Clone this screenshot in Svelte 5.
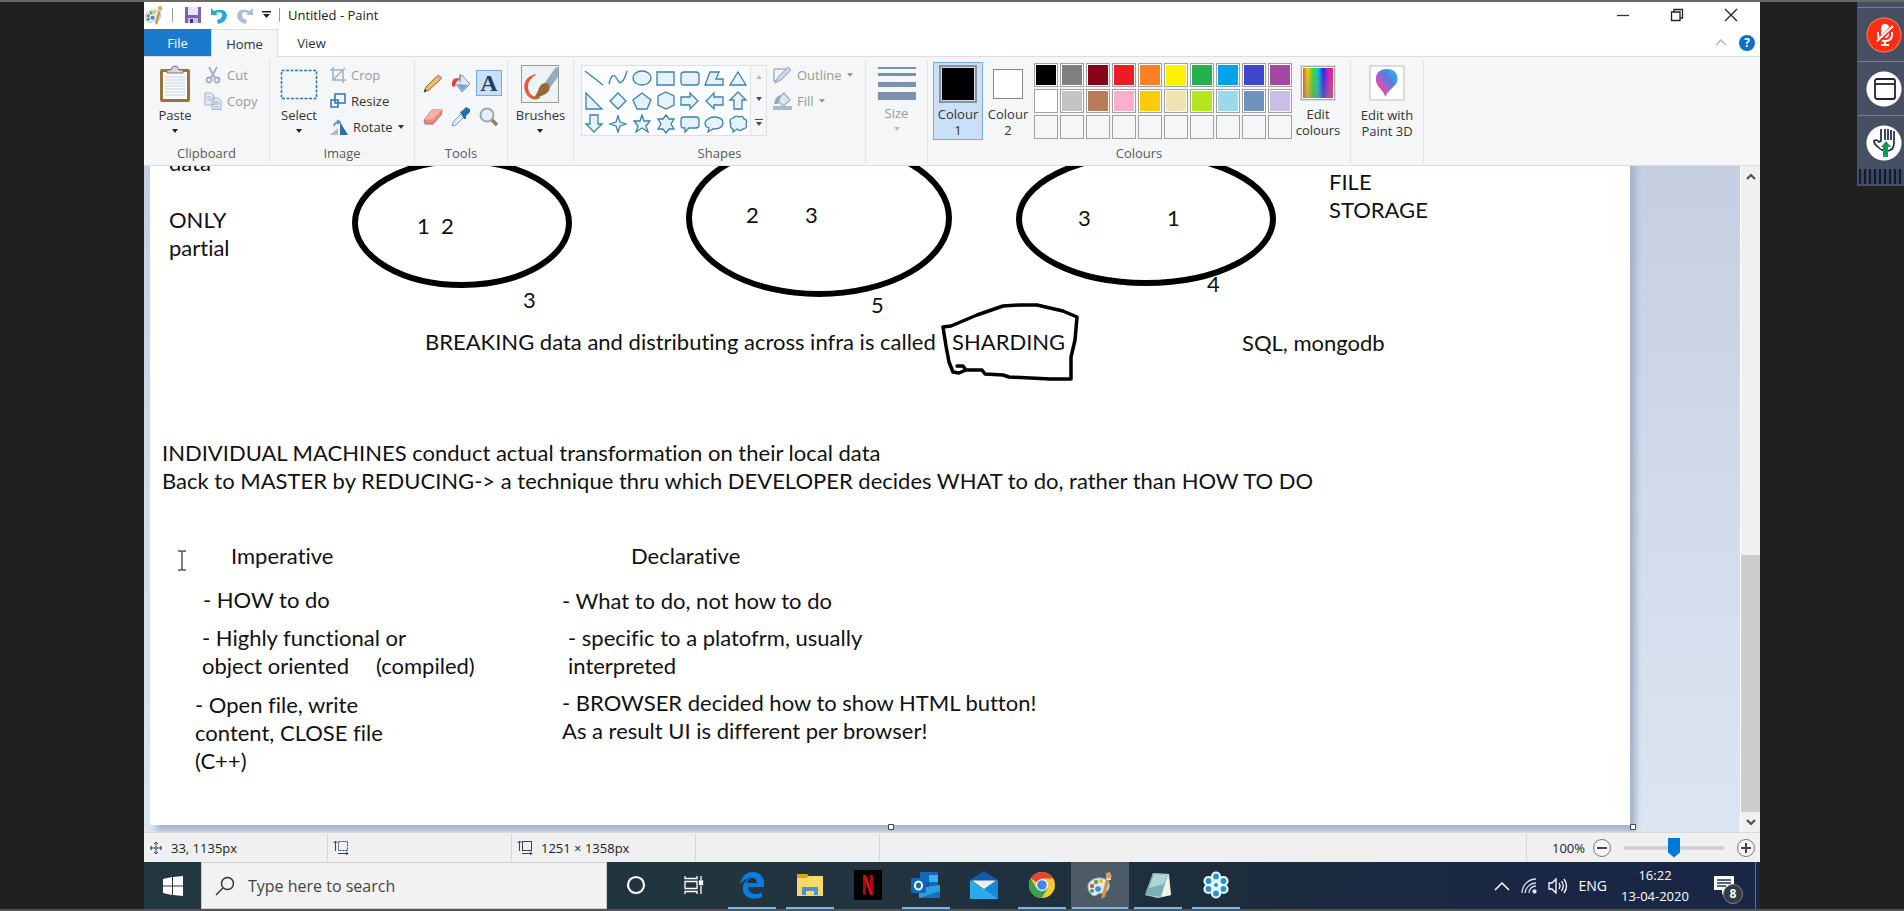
<script>
  const notes = [
    { x: 25, y: -17, t: 'data' },
    { x: 25, y: 40, t: 'ONLY\npartial' },
    { x: 273, y: 46, t: '1  2' },
    { x: 602, y: 35, t: '2' },
    { x: 661, y: 35, t: '3' },
    { x: 934, y: 38, t: '3' },
    { x: 1023, y: 38, t: '1' },
    { x: 379, y: 120, t: '3' },
    { x: 727, y: 125, t: '5' },
    { x: 1063, y: 104, t: '4' },
    { x: 1185, y: 2, t: 'FILE\nSTORAGE' },
    { x: 1098, y: 163, t: 'SQL, mongodb' },
    { x: 281, y: 162, t: 'BREAKING data and distributing across infra is called' },
    { x: 808, y: 162, t: 'SHARDING' },
    { x: 18, y: 273, t: 'INDIVIDUAL MACHINES conduct actual transformation on their local data\nBack to MASTER by REDUCING-> a technique thru which DEVELOPER decides WHAT to do, rather than HOW TO DO' },
    { x: 87, y: 376, t: 'Imperative' },
    { x: 487, y: 376, t: 'Declarative' },
    { x: 59, y: 420, t: '- HOW to do' },
    { x: 418, y: 421, t: '- What to do, not how to do' },
    { x: 58, y: 458, t: '- Highly functional or' },
    { x: 58, y: 486, t: 'object oriented' },
    { x: 232, y: 486, t: '(compiled)' },
    { x: 424, y: 458, t: '- specific to a platofrm, usually\ninterpreted' },
    { x: 51, y: 525, t: '- Open file, write\ncontent, CLOSE file\n(C++)' },
    { x: 418, y: 523, t: '- BROWSER decided how to show HTML button!\nAs a result UI is different per browser!' }
  ];
  const palette = [
    '#000000', '#7f7f7f', '#880015', '#ed1c24', '#ff7f27', '#fff200', '#22b14c', '#00a2e8', '#3f48cc', '#a349a4',
    '#ffffff', '#c3c3c3', '#b97a57', '#ffaec9', '#ffc90e', '#efe4b0', '#b5e61d', '#99d9ea', '#7092be', '#c8bfe7',
    '', '', '', '', '', '', '', '', '', ''
  ];
  const shapes = [
    ['Line', 'M1 3L19 17'],
    ['Curve', 'M1 16C3 7 6 5 9 11S15 16 19 3'],
    ['Oval', 'M10 3C15 3 19 6 19 10S15 17 10 17S1 14 1 10S5 3 10 3Z'],
    ['Rectangle', 'M1 4H18V17H1Z'],
    ['Rounded rectangle', 'M4 4H16Q19 4 19 7V14Q19 17 16 17H4Q1 17 1 14V7Q1 4 4 4Z'],
    ['Polygon', 'M6 4H15L12 11H19V17H1Z'],
    ['Triangle', 'M10 4L18 17H2Z'],
    ['Right triangle', 'M2 2L18 18H2Z'],
    ['Diamond', 'M10 2L18 10L10 18L2 10Z'],
    ['Pentagon', 'M10 2L19 9L15 18H5L1 9Z'],
    ['Hexagon', 'M10 1L18 5V14L10 18L2 14V5Z'],
    ['Right arrow', 'M1 6H10V2L18 10L10 18V14H1Z'],
    ['Left arrow', 'M19 6H10V2L2 10L10 18V14H19Z'],
    ['Up arrow', 'M6 18V9H2L10 1L18 9H14V18Z'],
    ['Down arrow', 'M6 1V10H2L10 18L18 10H14V1Z'],
    ['Four-point star', 'M10 2L12 8L18 10L12 12L10 18L8 12L2 10L8 8Z'],
    ['Five-point star', 'M10 1L12 7H18L14 12L16 18L10 14L4 18L6 12L2 7H8Z'],
    ['Six-point star', 'M10 1L13 5H18L15 10L18 15H13L10 19L7 15H2L5 10L2 5H7Z'],
    ['Rounded callout', 'M4 3H16Q19 3 19 6V11Q19 14 16 14H9L5 18V14H4Q1 14 1 11V6Q1 3 4 3Z'],
    ['Oval callout', 'M10 3C15 3 19 5 19 9S15 15 9 15L4 18L5 14C2 13 1 11 1 9S5 3 10 3Z'],
    ['Cloud callout', 'M5 4Q8 1 11 3Q15 1 16 5Q20 6 18 10Q20 14 15 15Q12 18 9 15L5 18V15Q1 13 3 10Q0 6 5 4Z']
  ];
  const statusCells = ['33, 1135px', '', '1251 × 1358px'];
  let zoom = $state(50);
</script>

{#snippet caret()}<svg class="caret" width="6" height="4" viewBox="0 0 6 4"><path d="M0 0H6L3 4Z" fill="currentColor" /></svg>{/snippet}

{#snippet paintIcon(size)}
  <svg width={size} height={size} viewBox="0 0 28 28">
    <path d="M3 20C-1 12 7 6 15 7C23 8 25 14 22 19C19 24 15 21 12 23C9 26 5 25 3 20Z" fill="#dcebf2" stroke="#8fb7cb" />
    <circle cx="6" cy="15" r="2.2" fill="#e0503c" /><circle cx="10" cy="11" r="2.2" fill="#57ae44" /><circle cx="15" cy="10" r="2" fill="#e8bd33" />
    <circle cx="6" cy="20" r="2" fill="#38a45f" /><circle cx="12" cy="18" r="2.8" fill="#4b86dc" />
    <path d="M20 2L24 1L26 6L20 9Z" fill="#d3a566" /><path d="M20 8L24 6L19 26L15 28Z" fill="#d29444" /><path d="M21 7H25V9H20Z" fill="#d8dde0" />
  </svg>
{/snippet}

<div class="screen">
  <div class="desktop">
    <header class="title">
      {@render paintIcon(20)}
      <span class="bar first"></span>
      <button class="bare" aria-label="Save"><svg width="18" height="18" viewBox="0 0 18 18"><path d="M1 1H17V17H1Z" fill="#7e62ae" /><path d="M4 1H14V9H4Z" fill="#e9e6f5" /><path d="M4 12H14V17H4Z" fill="#c8bedd" /><path d="M6 13H9V17H6Z" fill="#4c377c" /></svg></button>
      <button class="bare" aria-label="Undo"><svg width="18" height="18" viewBox="0 0 18 18"><path d="M1 2V9H8L6 7Q12 5 12 9Q12 13 7 14L8 18Q17 16 17 9Q15 1 4 5Z" fill="#30a5df" /></svg></button>
      <button class="bare" aria-label="Redo"><svg width="18" height="18" viewBox="0 0 18 18"><path d="M17 2V9H10L12 7Q6 5 6 9Q6 13 11 14L10 18Q1 16 1 9Q3 1 14 5Z" fill="#aebcd2" /></svg></button>
      <button class="bare more" aria-label="Customise toolbar"><svg width="9" height="8" viewBox="0 0 9 8"><path d="M0 0H9V1.500H0ZM1 3H8L4.500 7Z" fill="#222" /></svg></button>
      <span class="bar"></span>
      <span class="name">Untitled - Paint</span>
      <div class="winbtns">
        <button class="bare" aria-label="Minimise"><svg width="14" height="14" viewBox="0 0 14 14"><path d="M1 7.500H13" stroke="#333" stroke-width="1.300" /></svg></button>
        <button class="bare" aria-label="Restore"><svg width="14" height="14" viewBox="0 0 14 14" fill="none" stroke="#222" stroke-width="1.300"><path d="M1.500 4H10V12.500H1.500ZM4 4V1.500H12.500V10H10" /></svg></button>
        <button class="bare" aria-label="Close"><svg width="14" height="14" viewBox="0 0 14 14"><path d="M1 1L13 13M13 1L1 13" stroke="#222" stroke-width="1.300" /></svg></button>
      </div>
    </header>

    <nav class="tabs">
      <button class="tab file">File</button>
      <button class="tab on">Home</button>
      <button class="tab">View</button>
      <div class="tabend">
        <svg width="12" height="7" viewBox="0 0 12 7"><path d="M1 6L6 1L11 6" fill="none" stroke="#b5b5b5" stroke-width="1.500" /></svg>
        <button class="help" aria-label="Help">?</button>
      </div>
    </nav>

    <section class="ribbon">
      <div class="group clip">
        <div class="tools">
          <button class="big"><svg width="32" height="38" viewBox="0 0 32 38"><rect x="1" y="4" width="30" height="33" rx="2" fill="#9d703c" /><path d="M4 7H28V34H4Z" fill="#f8fafc" /><path d="M6 12H26M6 15H26M6 18H26M6 21H26M6 24H26M6 27H26M6 30H26" stroke="#c5d0dc" /><path d="M8 8V5H12Q13 1 16 1T20 5H24V8Z" fill="#d6d8da" stroke="#777" /></svg><span>Paste</span>{@render caret()}</button>
          <div class="rows">
            <button class="row off"><svg width="18" height="18" viewBox="0 0 18 18" fill="none" stroke="#9fb0ca" stroke-width="1.800"><path d="M5 1L11 12M13 1L7 12" /><circle cx="5" cy="14" r="2.500" /><circle cx="13" cy="14" r="2.500" /></svg>Cut</button>
            <button class="row off"><svg width="18" height="18" viewBox="0 0 18 18" fill="#e5ebf5" stroke="#9fb0ca"><path d="M1 1H7L10 4V13H1ZM8 6H14L17 9V17.500H8Z" /><path d="M3 5H7M3 8H7M10 10H15M10 12H15M10 15H15" /></svg>Copy</button>
          </div>
        </div>
        <h2>Clipboard</h2>
      </div>
      <div class="group image">
        <div class="tools">
          <button class="big"><svg width="38" height="38" viewBox="0 0 38 38"><rect x="1.500" y="5.500" width="35" height="28" fill="none" stroke="#2a76b4" stroke-width="1.500" stroke-dasharray="3 1.500" /></svg><span>Select</span>{@render caret()}</button>
          <div class="rows">
            <button class="row off"><svg width="16" height="16" viewBox="0 0 16 16" fill="none" stroke="#9fb0ca" stroke-width="1.500"><path d="M3 0V13H16M0 3H13V16M4 12L15 1" /></svg>Crop</button>
            <button class="row"><svg width="16" height="16" viewBox="0 0 16 16" fill="#f5f9fd" stroke="#2a76b4" stroke-width="1.500"><path d="M5 1H15V10H5ZM1 7H8V14H1Z" /></svg>Resize</button>
            <button class="row"><svg width="18" height="16" viewBox="0 0 18 16"><path d="M0 16H8V9Z" fill="#a9bdd1" /><path d="M10 3V16H18Z" fill="#2472b1" /><path d="M4 7Q5 3 8 3M7 1L10 3L7 5" fill="none" stroke="#3988c6" stroke-width="1.500" /></svg>Rotate{@render caret()}</button>
          </div>
        </div>
        <h2>Image</h2>
      </div>
      <div class="group tool">
        <div class="toolgrid">
          <button aria-label="Pencil"><svg width="20" height="20" viewBox="0 0 20 20"><path d="M1 19L3 14L15 2L19 5L6 17Z" fill="#efbd62" stroke="#8c673a" /><path d="M15 2L19 5L17 7L13 4Z" fill="#d9a5a5" /><path d="M1 19L2 16L4 18Z" fill="#333" /></svg></button>
          <button aria-label="Fill with colour"><svg width="20" height="20" viewBox="0 0 20 20"><path d="M11 2L19 11L11 19L4 10Z" fill="#dfe9f1" stroke="#7f96ac" /><path d="M6 11L17 12L11 18Z" fill="#6fa7d6" /><path d="M9 1V9" stroke="#667" /><path d="M9 6Q0 3 1 13L4 14L5 9Z" fill="#cf4d35" /></svg></button>
          <button class="picked" aria-label="Text">A</button>
          <button aria-label="Eraser"><svg width="20" height="18" viewBox="0 0 20 18"><path d="M1 12L9 2L19 2L18 7L10 16L2 16Z" fill="#e8897f" stroke="#c7635d" /><path d="M1 12L10 11L19 2L9 2Z" fill="#f4b2a8" /></svg></button>
          <button aria-label="Colour picker"><svg width="20" height="20" viewBox="0 0 20 20"><path d="M10 7L2 15L1 19L5 18L13 10" fill="#dcebf4" stroke="#829bb0" /><path d="M9 5L11 4L15 0L19 2L19 5L15 9L15 12L13 12Z" fill="#2b6da9" /></svg></button>
          <button aria-label="Magnifier"><svg width="20" height="20" viewBox="0 0 20 20"><path d="M12 12L18 18" stroke="#a17a55" stroke-width="3.500" /><circle cx="8" cy="8" r="6.500" fill="#e3f0fa" stroke="#9aa6b1" stroke-width="2" /></svg></button>
        </div>
        <h2>Tools</h2>
      </div>
      <div class="group brush">
        <button class="big"><svg width="38" height="38" viewBox="0 0 38 38"><path d="M.5.5H37.500V37.500H.5Z" fill="#edf3f5" stroke="#999" /><path d="M16 9C2 11 0 24 8 32Q14 37 20 32Q8 33 7 23Q6 15 16 9Z" fill="#dd5a35" /><path d="M23 19L35 2L37 3V12L28 24Z" fill="#94acc0" /><path d="M17 26Q19 17 26 18Q31 22 27 27Q23 31 13 33Z" fill="#9a6938" /></svg><span>Brushes</span>{@render caret()}</button>
      </div>
      <div class="group shape">
        <div class="tools">
          <div class="gallery">
            <div class="shapegrid">
              {#each shapes as [label, d], i}
                <button aria-label={label}><svg width="20" height="20" viewBox="0 0 20 20"><path {d} fill={i < 2 ? 'none' : '#e4f3fb'} stroke="#3f7fae" stroke-width="1.300" /></svg></button>
              {/each}
            </div>
            <div class="gscroll">
              <button class="dim" aria-label="Previous shapes"><svg width="6" height="4" viewBox="0 0 6 4"><path d="M3 0L6 4H0Z" fill="currentColor" /></svg></button>
              <button aria-label="Next shapes">{@render caret()}</button>
              <button aria-label="All shapes"><svg width="8" height="7" viewBox="0 0 8 7"><path d="M0 0H8V1H0ZM1 3H7L4 7Z" fill="currentColor" /></svg></button>
            </div>
          </div>
          <div class="rows">
            <button class="row off"><svg width="19" height="18" viewBox="0 0 19 18"><path d="M1 3H13M1 3V15H4" fill="none" stroke="#9fb0ca" stroke-width="1.500" /><path d="M2 17L5 11L15 1L18 4L8 14Z" fill="#cbd6e6" stroke="#8fa3c1" /></svg>Outline{@render caret()}</button>
            <button class="row off"><svg width="19" height="18" viewBox="0 0 19 18"><path d="M11 1L17 8L10 14L4 8Z" fill="#dee6f1" stroke="#9fb0ca" stroke-width="1.300" /><path d="M8 3Q2 4 1 12H5L7 7Z" fill="#91a6c6" /><path d="M0 14H19V18H0Z" fill="#aab9d0" /></svg>Fill{@render caret()}</button>
          </div>
        </div>
        <h2>Shapes</h2>
      </div>
      <div class="group size">
        <button class="big off"><svg width="38" height="34" viewBox="0 0 38 34"><path d="M0 0H38V2H0ZM0 6H38V9H0ZM0 15H38V20H0ZM0 25H38V33H0Z" fill="#7d90b2" /></svg><span>Size</span>{@render caret()}</button>
      </div>
      <div class="group colour">
        <div class="tools">
          <button class="big pick on"><i class="sw black"></i><span>Colour<br />1</span></button>
          <button class="big pick"><i class="sw"></i><span>Colour<br />2</span></button>
          <div class="palette">
            {#each palette as c}
              <button class:empty={!c} style:background-color={c} aria-label={c || 'Custom colour'}></button>
            {/each}
          </div>
          <button class="big edit"><i class="spectrum"></i><span>Edit<br />colours</span></button>
        </div>
        <h2>Colours</h2>
      </div>
      <div class="group three">
        <button class="big edit">
          <svg width="36" height="36" viewBox="0 0 36 36">
            <defs><linearGradient id="drop" x1="1" y1="0" x2="0" y2="1"><stop offset="0" stop-color="#18c3e8" /><stop offset=".4" stop-color="#5a7be0" /><stop offset=".65" stop-color="#c854c0" /><stop offset="1" stop-color="#ef5a3a" /></linearGradient></defs>
            <path d="M1 1H35V35H1Z" fill="#fff" stroke="#bbb" /><path d="M18 4C26 4 30 10 28 17C26 22 20 24 16 32C16 26 8 23 7 16C6 8 11 4 18 4Z" fill="url(#drop)" />
          </svg>
          <span>Edit with<br />Paint 3D</span>
        </button>
      </div>
    </section>

    <main class="work">
      <div class="board">
        <div class="paper"></div>
        <svg class="ink" width="1596" height="666" viewBox="144 166 1596 666" fill="none" stroke="#000">
          <g stroke-width="6"><ellipse cx="462" cy="223" rx="107" ry="62" /><ellipse cx="819" cy="218" rx="130" ry="76" /><ellipse cx="1146" cy="219" rx="127" ry="64" /></g>
          <path d="M957 366L963 366L966 370L959 373L953 372L949 362L946 346L943 327L951 326L977 315L1003 306L1020 305H1037L1063 311L1077 317L1075 340L1071 357V379H1050L1009 377L1003 375L985 374L982 370H966" stroke-width="3.500" stroke-linejoin="round" stroke-linecap="round" />
          <path d="M178 551H181L182 552L183 551H186M182 552V569M178 570H181L182 569L183 570H186" stroke="#555" stroke-width="1.500" />
          <g fill="#fff" stroke="#444"><path d="M888.500 824.500H893.500V829.500H888.500ZM1630.500 824.500H1635.500V829.500H1630.500Z" /></g>
        </svg>
        {#each notes as n}
          <p class="note" style:left="{n.x}px" style:top="{n.y}px">{n.t}</p>
        {/each}
      </div>
      <div class="scroll">
        <button aria-label="Scroll up"><svg width="10" height="7" viewBox="0 0 10 7"><path d="M1 6L5 2L9 6" fill="none" stroke="#505050" stroke-width="2.200" /></svg></button>
        <div class="track"><div class="thumb"></div></div>
        <button aria-label="Scroll down"><svg width="10" height="7" viewBox="0 0 10 7"><path d="M1 1L5 5L9 1" fill="none" stroke="#505050" stroke-width="2.200" /></svg></button>
      </div>
    </main>

    <footer class="status">
      {#each statusCells as s, i}
        <div class="cell">
          {#if i === 0}
            <svg width="14" height="14" viewBox="0 0 14 14"><path d="M7 1V13M1 7H13M5 3L7 1L9 3M5 11L7 13L9 11M3 5L1 7L3 9M11 5L13 7L11 9" fill="none" stroke="#2b4668" /></svg>
          {:else}
            <svg width="16" height="15" viewBox="0 0 16 15" fill="none" stroke="#2b4668"><path d="M2.500 1V11M.5 3L2.500 1L4.500 3M5 13.500H15M13 11.500L15 13.500L13 15" /><rect x="5.500" y="1.500" width="9" height="9" stroke-dasharray={i === 1 ? '2 1' : 'none'} /></svg>
          {/if}
          {s}
        </div>
      {/each}
      <div class="cell"></div>
      <div class="zoom">
        <label for="zoom">100%</label>
        <button aria-label="Zoom out"><svg width="10" height="10" viewBox="0 0 10 10"><path d="M0 5H10" stroke="#444" stroke-width="2" /></svg></button>
        <input id="zoom" type="range" bind:value={zoom} />
        <button aria-label="Zoom in"><svg width="10" height="10" viewBox="0 0 10 10"><path d="M0 5H10M5 0V10" stroke="#444" stroke-width="2" /></svg></button>
      </div>
    </footer>

    <footer class="taskbar">
      <button class="start" aria-label="Start"><svg width="20" height="20" viewBox="0 0 20 20"><path d="M0 3L9 1V9.500H0ZM10 1L20 0V9.500H10ZM0 10.500H9V19L0 17ZM10 10.500H20V20L10 19Z" fill="#fff" /></svg></button>
      <div class="search">
        <svg width="20" height="20" viewBox="0 0 20 20"><circle cx="12.500" cy="7.500" r="6" fill="none" stroke="#333" stroke-width="1.500" /><path d="M8 12L1 19" stroke="#333" stroke-width="1.500" /></svg>
        <input type="text" placeholder="Type here to search" aria-label="Search" />
      </div>
      <button class="app" aria-label="Cortana"><svg width="20" height="20" viewBox="0 0 20 20"><circle cx="10" cy="10" r="8" fill="none" stroke="#fff" stroke-width="2.200" /></svg></button>
      <button class="app" aria-label="Task view"><svg width="20" height="20" viewBox="0 0 20 20" fill="none" stroke="#fff" stroke-width="1.300"><path d="M1 1V3.500H13V1M1 19V16.500H13V19M1 6.500H13V13.500H1ZM17 1V5M17 11V19" /><path d="M15.500 6H18.500V9.500H15.500Z" fill="#fff" /></svg></button>
      <button class="app open" aria-label="Edge"><svg width="26" height="28" viewBox="0 0 26 28"><path d="M1 13C3 4 8 1 14 1C21 1 25 6 25 12V16H9C9 23 17 25 23 21V26C13 30 3 26 4 17C4 12 7 9 11 7C9 9 8 11 8 12H18C18 5 8 5 1 13Z" fill="#0a7ce0" /></svg></button>
      <button class="app open" aria-label="File Explorer"><svg width="28" height="24" viewBox="0 0 28 24"><path d="M1 1H11L13 3H27V23H1Z" fill="#dda419" /><path d="M1 5H11L13 3H27V23H1Z" fill="#fbd969" /><path d="M6 22V14H22V22H18V18H10V22Z" fill="#4795ce" /></svg></button>
      <button class="app" aria-label="Netflix"><svg width="28" height="30" viewBox="0 0 28 30"><path d="M0 0H28V30H0Z" fill="#000" /><path d="M9 5V25L12 24.500V5ZM16 5H19V25L16 24.500Z" fill="#a90810" /><path d="M9 5H12L19 25L16 24.500Z" fill="#e50914" /></svg></button>
      <button class="app open" aria-label="Outlook"><svg width="30" height="28" viewBox="0 0 30 28"><path d="M9 1H27V18H9Z" fill="#1767b8" /><path d="M18 4H27V11H18Z" fill="#37b2ee" /><path d="M9 11H18V18H9Z" fill="#0a56a4" /><path d="M8 17L29 14V27H8Z" fill="#2aa0e2" /><path d="M8 27L29 20V27Z" fill="#1771bd" /><rect y="7" width="15" height="15" rx="1" fill="#1068b8" /><ellipse cx="7.500" cy="14.500" rx="3.500" ry="4" fill="none" stroke="#fff" stroke-width="2" /></svg></button>
      <button class="app" aria-label="Mail"><svg width="30" height="28" viewBox="0 0 30 28"><path d="M1 9L15 0L29 9V18H1Z" fill="#155ba9" /><path d="M1 9L15 18L29 9V28H1Z" fill="#2da9ec" /><path d="M15 18L29 9V28Z" fill="#1589d8" /><path d="M3 9.500H27L15 18Z" fill="#eef2f6" /></svg></button>
      <button class="app open" aria-label="Chrome"><svg width="28" height="28" viewBox="0 0 28 28"><circle cx="14" cy="14" r="13" fill="#fcc933" /><path d="M14 14L2.700 7.500A13 13 0 0 1 25.300 7.500H14Z" fill="#e54335" /><path d="M14 14L8.400 17.300L2.700 7.500A13 13 0 0 0 14 27L19.600 17.300Z" fill="#35a352" /><circle cx="14" cy="14" r="6" fill="#fff" /><circle cx="14" cy="14" r="4.800" fill="#4286f4" /></svg></button>
      <button class="app open active" aria-label="Paint">{@render paintIcon(28)}</button>
      <button class="app open" aria-label="Notepad"><svg width="28" height="28" viewBox="0 0 28 28"><path d="M1 24L9 2L25 3L27 24L14 27Z" fill="#d3dcdb" /><path d="M1 24L9 2L24 4L17 26Z" fill="#78b1b4" /><path d="M5 17L10 3L23 4L20 13Z" fill="#afd5d4" /><path d="M17 26L24 4L27 24Z" fill="#f1f2e8" /></svg></button>
      <button class="app open" aria-label="Meeting"><svg width="28" height="28" viewBox="0 0 28 28"><g fill="#2494d0" stroke="#eaf8ff" stroke-width="2.200"><circle cx="14" cy="5.500" r="4" /><circle cx="21.500" cy="10" r="4" /><circle cx="21.500" cy="18" r="4" /><circle cx="14" cy="22.500" r="4" /><circle cx="6.500" cy="18" r="4" /><circle cx="6.500" cy="10" r="4" /></g><circle cx="14" cy="14" r="4.500" fill="#eaf8ff" /><circle cx="14" cy="14" r="2" fill="#2494d0" /></svg></button>
      <div class="tray">
        <svg width="16" height="10" viewBox="0 0 16 10"><path d="M1 9L8 2L15 9" fill="none" stroke="#fff" stroke-width="1.500" /></svg>
        <svg width="16" height="16" viewBox="0 0 16 16" fill="none" stroke="#dde" stroke-width="1.300"><path d="M1 15A14 14 0 0 1 15 1M4 15A11 11 0 0 1 15 5M8 15A7 7 0 0 1 15 8" /><circle cx="13.500" cy="13.500" r="1.500" fill="#fff" /></svg>
        <svg width="20" height="16" viewBox="0 0 20 16" fill="none" stroke="#fff" stroke-width="1.300"><path d="M1 5H4L8 1V15L4 11H1ZM11 5Q13 8 11 11M13.500 3Q17 8 13.500 13M16 1Q21 8 16 15" /></svg>
        <span>ENG</span>
      </div>
      <div class="clock"><span>16:22</span><span>13-04-2020</span></div>
      <button class="notify" aria-label="Notifications"><svg width="20" height="19" viewBox="0 0 20 19"><path d="M0 0H20V14H12L8 19V14H0Z" fill="#fff" /><path d="M3 4H17M3 7H17M3 10H12" stroke="#26324c" stroke-width="1.300" /></svg><b>8</b></button>
      <span class="peek"></span>
    </footer>
  </div>

  <aside class="dock">
    <button class="red" aria-label="Unmute"><svg width="20" height="24" viewBox="0 0 20 24"><rect x="6" y="1" width="8" height="14" rx="4" fill="#fff" /><path d="M3 9V11Q3 18 10 18T17 11V9M10 18V21M6 22H14" fill="none" stroke="#fff" stroke-width="2" /><path d="M3 19L17 4" stroke="#ff2d12" stroke-width="4" /><path d="M2 18L18 3" stroke="#fff" stroke-width="2" /></svg></button>
    <button aria-label="Window"><svg width="22" height="22" viewBox="0 0 22 22" fill="none" stroke="#1f2433" stroke-width="1.800"><rect x="1" y="1" width="20" height="20" rx="2" /><path d="M1 6H21" /></svg></button>
    <button aria-label="Raise hand"><svg width="24" height="30" viewBox="0 0 24 30"><path d="M8 1V13L6 14Q4 11 1 13Q1 16 5 19Q9 23 13 23Q21 23 21 15V3M12 1V12M15 1V12M18 2V12" fill="none" stroke="#1f2947" stroke-width="1.700" /><path d="M13 13L18 19H15V29H10V19H8Z" fill="#0a9d50" /></svg></button>
    <div class="grip"></div>
  </aside>
</div>

<style>
  :global(body) { margin: 0; background: #202020; }
  button { border: 0; padding: 0; background: none; font: inherit; color: inherit; }
  svg { display: block; flex: none; }
  .screen { position: relative; box-sizing: border-box; height: 100vh; min-height: 720px; padding: 0 144px; border-top: 2px solid #696969; border-bottom: 2px solid #555; background: #202020; font: 13px/16px "Open Sans", "Noto Sans", sans-serif; color: #333; overflow: hidden; }
  .desktop { display: flex; flex-direction: column; height: 100%; background: #fff; }

  .title { box-sizing: border-box; display: flex; align-items: center; height: 27px; flex: none; gap: 8px; padding-bottom: 2px; }
  .title .bare { display: grid; place-items: center; min-width: 18px; }
  .title .more { min-width: 9px; }
  .bar { width: 1px; height: 14px; background: #999; }
  .bar.first { margin: 0 3px 0 0; }
  .name { color: #222; }
  .winbtns { display: flex; gap: 36px; margin-left: auto; padding-right: 20px; }

  .tabs { display: flex; height: 27px; flex: none; border-bottom: 1px solid #dcdddf; }
  .tab { width: 67px; height: 27px; }
  .tab.file { background: #1979ca; color: #fff; }
  .tab.on { box-sizing: border-box; height: 28px; border: 1px solid #dcdddf; border-bottom: 0; background: #f5f6f7; }
  .tabend { display: flex; align-items: center; gap: 12px; margin-left: auto; padding-right: 5px; }
  .help { width: 16px; height: 16px; border-radius: 50%; background: #0d70c5; color: #fff; font-size: 12px; font-weight: 700; line-height: 16px; }

  .ribbon { display: flex; flex: none; height: 108px; border-bottom: 1px solid #dcdddf; background: #f5f6f7; }
  .group { box-sizing: border-box; position: relative; display: flex; flex-direction: column; justify-content: space-between; align-items: center; margin: 3px 0 2px; padding: 2px 0 0; border-right: 1px solid #e1e2e4; }
  .clip { width: 126px; } .image { width: 145px; } .tool { width: 93px; } .brush { width: 66px; }
  .shape { width: 292px; } .size { width: 62px; } .colour { width: 423px; } .three { width: 73px; }
  h2 { margin: 0; font-size: 13px; line-height: 20px; font-weight: 400; color: #5a5a5a; }
  .tools { display: flex; width: 100%; }
  .clip .tools { padding-left: 8px; box-sizing: border-box; gap: 6px; }
  .image .tools { padding-left: 6px; box-sizing: border-box; gap: 8px; }
  .shape .tools { padding-left: 7px; box-sizing: border-box; gap: 6px; }
  .big { display: flex; flex-direction: column; align-items: center; gap: 4px; min-width: 46px; padding-top: 3px; }
  .big .caret { margin-top: 2px; color: #222; }
  .big.off .caret { color: #bbb; }
  .off { color: #9a9a9a; }
  .rows { display: flex; flex-direction: column; }
  .row { display: flex; align-items: center; gap: 5px; height: 26px; white-space: nowrap; }
  .toolgrid { display: grid; grid-template-columns: repeat(3, 26px); grid-auto-rows: 26px; gap: 8px 2px; padding-top: 8px; }
  .toolgrid button { display: grid; place-items: center; }
  .toolgrid .picked { border: 1px solid #77ace9; background: #c9e0f7; color: #203e66; font: 700 24px/22px "Liberation Serif", serif; }
  .gallery { display: flex; height: 69px; border: 1px solid #dcdfe3; background: #fafcfe; margin-top: 3px; }
  .shapegrid { display: grid; grid-template-columns: repeat(7, 24px); grid-auto-rows: 23px; }
  .shapegrid button { display: grid; place-items: center; }
  .gscroll { display: grid; width: 15px; border-left: 1px solid #e0e3e6; color: #444c5e; background: #f5f6f7; }
  .gscroll button { display: grid; place-items: center; }
  .gscroll .dim { color: #bbb; }
  .size .big { padding-top: 5px; }
  .colour .tools { padding-left: 5px; box-sizing: border-box; align-items: flex-start; }
  .pick { box-sizing: border-box; width: 50px; height: 78px; border: 1px solid transparent; margin-top: 0; padding-top: 2px; gap: 3px; }
  .pick.on { border-color: #77ace9; background: #c9e0f7; }
  .pick i { box-sizing: border-box; width: 30px; height: 30px; margin: 4px; border: 1px solid #888; background: #fff; }
  .pick .black { width: 38px; height: 38px; margin: 0; border: 2px solid #88929c; background: #000; box-shadow: inset 0 0 0 1px #ccdcec; }
  .palette { display: grid; grid-template-columns: repeat(10, 24px); grid-auto-rows: 24px; gap: 2px; margin: 1px 1px 0 1px; }
  .palette button { border: 1px solid #a0a0a0; box-shadow: inset 0 0 0 1px #fff; }
  .palette .empty { background: #f5f6f7; box-shadow: none; }
  .edit { width: 50px; gap: 6px; }
  .three .edit { width: 70px; }
  .spectrum { box-sizing: border-box; width: 34px; height: 34px; margin-top: 1px; border: 1px solid #aaa; outline: 1px solid #ddd; background: linear-gradient(transparent, #8888), linear-gradient(90deg, #e33, #fc0, #4d2, #0cd, #22e, #d1c, #e34); box-shadow: inset 0 0 0 1px #fff; }

  .work { display: flex; flex: 1; min-height: 0; }
  .board { position: relative; flex: 1; overflow: hidden; background: linear-gradient(#c6cfe1, #dce6f2); }
  .paper { position: absolute; left: 6px; top: -16px; bottom: 7px; width: 1480px; background: #fff; box-shadow: 6px 6px 6px #a5b4cc; }
  .ink { position: absolute; left: 0; top: 0; }
  .note { position: absolute; margin: 0; font: 22px/28px Lato, "Open Sans", sans-serif; font-variant-ligatures: none; color: #111; white-space: pre; }
  .scroll { display: flex; flex-direction: column; width: 19px; flex: none; border-left: 1px solid #fff; background: #f0f0f0; }
  .scroll button { display: grid; place-items: center; height: 20px; }
  .track { display: flex; flex-direction: column; justify-content: flex-end; flex: 1; }
  .thumb { height: 41%; background: #cdcdcd; }

  .status { display: flex; align-items: center; flex: none; height: 29px; border-top: 1px solid #d9d9d9; background: #f0f0f0; color: #222; }
  .cell { box-sizing: border-box; display: flex; align-items: center; gap: 8px; width: 184px; height: 27px; padding-left: 5px; border-right: 1px solid #d7d7d7; }
  .zoom { display: flex; align-items: center; gap: 8px; height: 27px; margin-left: auto; padding: 0 5px 0 25px; border-left: 1px solid #d7d7d7; }
  .zoom button { display: grid; place-items: center; width: 18px; height: 18px; border: 1px solid #777; border-radius: 50%; background: #f7f7f7; }
  .zoom input { appearance: none; width: 100px; height: 20px; margin: 0 5px; background: linear-gradient(#d3d3d3, #d3d3d3) center / 100% 4px no-repeat; }
  .zoom input::-webkit-slider-thumb { appearance: none; width: 12px; height: 20px; background: #0078d7; clip-path: polygon(0 0, 100% 0, 100% 75%, 50% 100%, 0 75%); }

  .taskbar { display: flex; flex: none; height: 47px; background: linear-gradient(90deg, #22373f, #21343f 45%, #1c2c3e 70%, #1a2744 85%); color: #fff; }
  .start { display: grid; place-items: center; width: 57px; }
  .search { box-sizing: border-box; display: flex; align-items: center; gap: 13px; width: 406px; padding-left: 13px; border: 1px solid #ccc; background: #f2f2f2; }
  .search input { flex: 1; min-width: 0; border: 0; padding: 0; background: none; font: 16px/24px "Open Sans", "Noto Sans", sans-serif; }
  .search input::placeholder { color: #444; }
  .app { display: grid; place-items: center; width: 58px; border: solid transparent; border-width: 0 5px 2px; box-sizing: border-box; }
  .app.open { background: linear-gradient(#76b9ed, #76b9ed) center bottom / 48px 2px no-repeat border-box; }
  .app.active { border-width: 0 1px 2px; background: linear-gradient(#76b9ed, #76b9ed) center bottom / 56px 2px no-repeat border-box, #4c5b66; }
  .tray { display: flex; align-items: center; gap: 11px; margin-left: auto; font-size: 14px; }
  .clock { display: flex; flex-direction: column; justify-content: center; align-items: center; gap: 5px; width: 96px; font-size: 13px; }
  .notify { position: relative; display: grid; place-items: center; width: 42px; }
  .notify b { position: absolute; left: 20px; top: 22px; width: 18px; height: 18px; border: 1px solid #888; border-radius: 50%; background: #333b45; font-size: 12px; line-height: 18px; }
  .peek { width: 1px; margin: 0 4px 0 10px; background: #66718a; }

  .dock { position: absolute; right: 0; top: -2px; box-sizing: border-box; width: 47px; height: 186px; padding-top: 7px; background: #474f62; }
  .dock button { display: grid; place-items: center; box-sizing: border-box; width: 46px; height: 54px; margin-left: 1px; border-top: 1px solid #748098; background: radial-gradient(circle at 26px 27px, #fff 17px, transparent 18px); padding-left: 7px; }
  .dock .red { background: radial-gradient(circle at 26px 27px, #ff2d12 16px, #ff7d62 17px, transparent 18px); }
  .grip { height: 15px; margin: 0 1px 0 2px; background: repeating-linear-gradient(90deg, #111b29 0 2px, #3b4660 2px 5px); }
</style>
